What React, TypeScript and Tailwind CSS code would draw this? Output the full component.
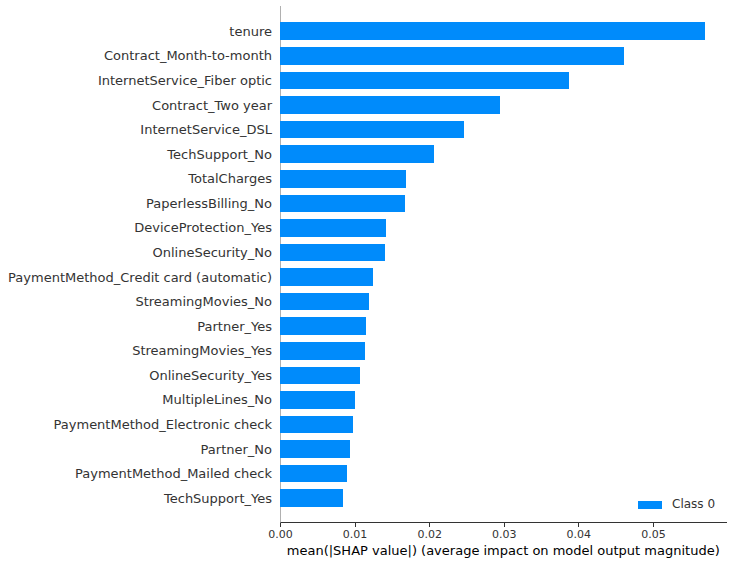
import * as React from 'react'

interface Feature {
  name: string
  value: number
}

// mean |SHAP| per feature, read off the reference chart
const FEATURES: Feature[] = [
  { name: 'tenure', value: 0.05697 },
  { name: 'Contract_Month-to-month', value: 0.04611 },
  { name: 'InternetService_Fiber optic', value: 0.03874 },
  { name: 'Contract_Two year', value: 0.02949 },
  { name: 'InternetService_DSL', value: 0.02466 },
  { name: 'TechSupport_No', value: 0.02064 },
  { name: 'TotalCharges', value: 0.01689 },
  { name: 'PaperlessBilling_No', value: 0.01676 },
  { name: 'DeviceProtection_Yes', value: 0.01421 },
  { name: 'OnlineSecurity_No', value: 0.01408 },
  { name: 'PaymentMethod_Credit card (automatic)', value: 0.01247 },
  { name: 'StreamingMovies_No', value: 0.01193 },
  { name: 'Partner_Yes', value: 0.01153 },
  { name: 'StreamingMovies_Yes', value: 0.0114 },
  { name: 'OnlineSecurity_Yes', value: 0.01072 },
  { name: 'MultipleLines_No', value: 0.01005 },
  { name: 'PaymentMethod_Electronic check', value: 0.00979 },
  { name: 'Partner_No', value: 0.00938 },
  { name: 'PaymentMethod_Mailed check', value: 0.00898 },
  { name: 'TechSupport_Yes', value: 0.00845 },
]

const TICKS = ['0.00', '0.01', '0.02', '0.03', '0.04', '0.05']
const PX_PER_UNIT = 7460

export default function App() {
  return (
    <div className="w-[733px] h-[564px] bg-white overflow-hidden font-['DejaVu_Sans',sans-serif] text-[#333333]">
      {/* plot */}
      <div className="flex pt-[6px]">
        <div className="w-[280px] pt-[13px] shrink-0">
          {FEATURES.map((f) => (
            <div
              key={f.name}
              className="h-[24.58px] flex items-center justify-end pr-[8px] text-[13px] leading-[15px] whitespace-nowrap"
            >
              {f.name}
            </div>
          ))}
        </div>
        <div className="relative w-[446.5px] h-[517px] border-l border-b border-l-[#b0b0b0] border-b-[#333333] pt-[13px]">
          {FEATURES.map((f) => (
            <div key={f.name} className="h-[24.58px] flex items-center">
              <div
                className="h-[17.6px] bg-[#008bfb] -ml-px"
                style={{ width: f.value * PX_PER_UNIT }}
              />
            </div>
          ))}

          {/* legend */}
          <div className="absolute left-[357px] top-[491px] flex items-center">
            <div className="w-[24px] h-[8px] bg-[#008bfb]" />
            <span className="ml-[10px] text-[12px] leading-[15px]">Class 0</span>
          </div>
        </div>
      </div>

      {/* x axis */}
      <div className="flex ml-[243.2px]">
        {TICKS.map((t) => (
          <div key={t} className="w-[74.6px] flex flex-col items-center">
            <div className="w-px h-[4px] bg-[#333333]" />
            <span className="mt-[1px] text-[11px] leading-[13px]">{t}</span>
          </div>
        ))}
      </div>
      <div className="ml-[280px] w-[446.5px] mt-[2.3px] text-center text-[13px] leading-[15px] text-black whitespace-nowrap">
        mean(|SHAP value|) (average impact on model output magnitude)
      </div>
    </div>
  )
}
